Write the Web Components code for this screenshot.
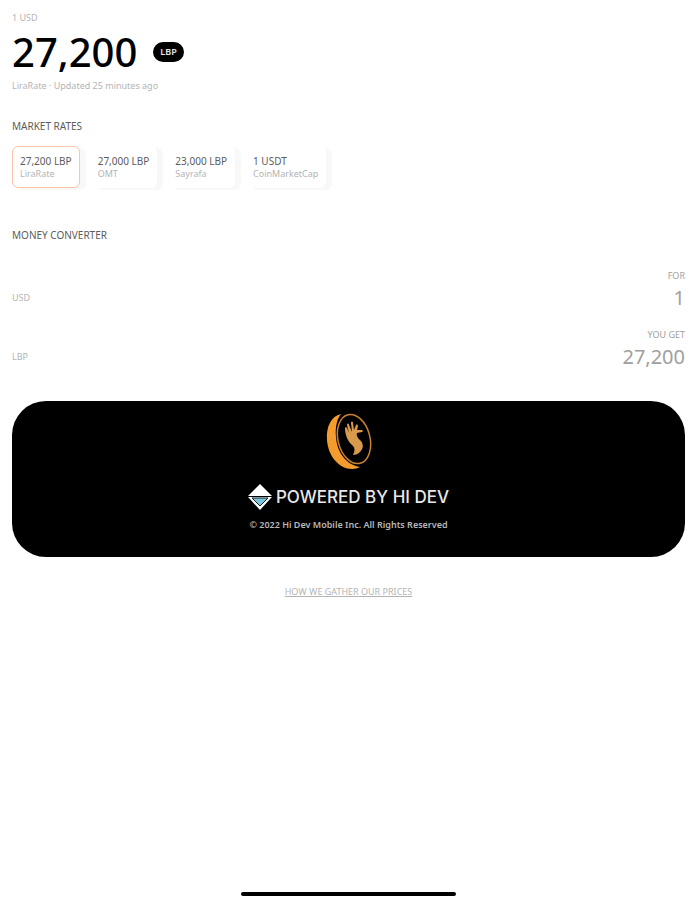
<!DOCTYPE html>
<html lang="en">
<head>
<meta charset="utf-8">
<meta name="viewport" content="width=device-width, initial-scale=1">
<title>LiraRate</title>
<style>
    html, body {
        margin: 0;
        background: #ffffff;
    }
</style>
</head>
<body>
<lira-app>
    <rate-header currency="LBP" updated="LiraRate · Updated 25 minutes ago">
        <span slot="base">1 USD</span>
        <span slot="value">27,200</span>
    </rate-header>
    <rate-section heading="Market rates">
        <rate-list>
            <rate-card selected rate="27,200 LBP" source="LiraRate"></rate-card>
            <rate-card rate="27,000 LBP" source="OMT"></rate-card>
            <rate-card rate="23,000 LBP" source="Sayrafa"></rate-card>
            <rate-card rate="1 USDT" source="CoinMarketCap"></rate-card>
        </rate-list>
    </rate-section>
    <rate-section heading="Money converter" roomy>
        <money-field label="FOR" unit="USD" value="1"></money-field>
        <money-field label="YOU GET" unit="LBP" value="27,200"></money-field>
    </rate-section>
    <powered-banner>© 2022 Hi Dev Mobile Inc. All Rights Reserved</powered-banner>
    <text-link href="#prices">HOW WE GATHER OUR PRICES</text-link>
    <home-indicator></home-indicator>
</lira-app>

<script>
function define(name, html, setup) {
    const template = document.createElement("template");
    template.innerHTML = html;
    customElements.define(name, class extends HTMLElement {
        constructor() {
            super();
            this.attachShadow({ mode: "open" });
            this.shadowRoot.appendChild(template.content.cloneNode(true));
        }
        connectedCallback() {
            if (setup) setup(this, (selector) => this.shadowRoot.querySelector(selector));
        }
    });
}

define("lira-app", /*html*/ `
<style>
    :host {
        --black: #000000;
        --ink: #5c5c5c;
        --gray: #a0a0a0;
        --pale: #b4b4b4;
        --accent: #fcc4a8;
        display: flex;
        flex-direction: column;
        box-sizing: border-box;
        min-height: 100vh;
        padding: 12px 13px 4px 12px;
        font-family: "Noto Sans", "Open Sans", sans-serif;
        font-size: 9px;
        line-height: 12px;
        color: var(--pale);
    }
</style>
<slot></slot>
`);

define("rate-header", /*html*/ `
<style>
    :host { display: block; }
    .row {
        display: flex;
        align-items: center;
        gap: 16px;
        height: 56px;
    }
    h1 {
        margin: 0;
        font-size: 40px;
        line-height: 56px;
        font-weight: 500;
        color: var(--black);
    }
    .badge {
        padding: 4px 7px;
        border-radius: 10px;
        background: var(--black);
        color: #e4e4e4;
        font-weight: 600;
    }
    p { margin: 0; }
</style>
<slot name="base"></slot>
<div class="row">
    <h1><slot name="value"></slot></h1>
    <span class="badge"></span>
</div>
<p></p>
`, (host, $) => {
    $(".badge").textContent = host.getAttribute("currency");
    $("p").textContent = host.getAttribute("updated");
});

define("rate-section", /*html*/ `
<style>
    :host {
        display: block;
        margin-top: 27px;
    }
    :host([roomy]) { margin-top: 40px; }
    h2 {
        margin: 0 0 13px;
        font-size: 10px;
        line-height: 14px;
        font-weight: 400;
        text-transform: uppercase;
        color: var(--ink);
    }
    :host([roomy]) h2 { margin-bottom: 28px; }
</style>
<section>
    <h2></h2>
    <slot></slot>
</section>
`, (host, $) => {
    $("h2").textContent = host.getAttribute("heading");
});

define("rate-list", /*html*/ `
<style>
    :host {
        display: flex;
        flex-wrap: wrap;
        gap: 10px;
    }
</style>
<slot></slot>
`);

define("rate-card", /*html*/ `
<style>
    :host { display: block; }
    button {
        display: block;
        padding: 7px;
        border: 1px solid transparent;
        border-radius: 6px;
        background: #ffffff;
        box-shadow: 6px 2px 2px #f8f8f8;
        font: inherit;
        text-align: left;
        color: var(--pale);
        cursor: pointer;
    }
    :host([selected]) button { border-color: var(--accent); }
    .rate {
        display: block;
        font-size: 10px;
        line-height: 14px;
        color: var(--ink);
    }
    .source { display: block; }
</style>
<button type="button">
    <span class="rate"></span>
    <span class="source"></span>
</button>
`, (host, $) => {
    $(".rate").textContent = host.getAttribute("rate");
    $(".source").textContent = host.getAttribute("source");
    $("button").setAttribute("aria-pressed", host.hasAttribute("selected"));
});

define("money-field", /*html*/ `
<style>
    :host {
        display: block;
        margin-bottom: 15px;
    }
    label {
        display: block;
        text-align: right;
        color: var(--gray);
    }
    .row {
        display: flex;
        align-items: center;
        height: 32px;
    }
    input {
        flex: 1;
        min-width: 0;
        padding: 0;
        border: 0;
        outline: none;
        background: none;
        font: inherit;
        font-size: 20px;
        line-height: 32px;
        text-align: right;
        color: var(--gray);
    }
</style>
<label for="amount"></label>
<div class="row">
    <span></span>
    <input id="amount" type="text" inputmode="decimal">
</div>
`, (host, $) => {
    $("label").textContent = host.getAttribute("label");
    $("span").textContent = host.getAttribute("unit");
    $("input").value = host.getAttribute("value");
});

define("powered-banner", /*html*/ `
<style>
    :host { display: block; margin-top: 13px; }
    footer {
        display: flex;
        flex-direction: column;
        align-items: center;
        padding: 12px 16px 26px;
        border-radius: 34px;
        background: var(--black);
        color: #b8b8b8;
    }
    .brand {
        display: flex;
        align-items: center;
        gap: 4px;
        margin: 12px 0 8px;
        font-family: Inter, "Noto Sans", sans-serif;
        font-size: 17px;
        line-height: 28px;
        font-weight: 500;
        color: #e8e8e8;
    }
    svg { display: block; }
    .legal { font-weight: 600; }
</style>
<footer>
    <svg width="48" height="58" viewBox="0 0 48 58" aria-hidden="true">
        <path d="M16 1C6 3 1 14 2 27c1 16 12 29 25 29 3 0 6-1 8-2C22 52 12 40 11 24 10 14 12 6 16 1Z" fill="#f59a2c"/>
        <ellipse cx="29" cy="26" rx="16" ry="25" transform="rotate(-14 29 26)" fill="none" stroke="#c98234" stroke-width="1.5"/>
        <path d="M20 15c0-1 2-1 2 0l2 5-2-8c0-2 2-2 2 0l3 7-1-9c0-2 2-2 2 0l1 7 2-5c1-1 2 0 2 1l-1 4 5 0c1 0 1 2 0 2l-5 1c-1 3 1 5 4 8 3 4 2 8-1 11-2 2-4 3-7 3 2-4 2-7 0-9-5-4-8-11-8-18Z" fill="#d99a4e"/>
    </svg>
    <div class="brand">
        <svg width="24" height="26" viewBox="0 0 24 26" aria-hidden="true">
            <path d="M12 0 24 12H0Z" fill="#ffffff"/>
            <path d="M0 13H24L12 26Z" fill="#ffffff"/>
            <path d="M4 14H20L12 22Z" fill="#7cc5da" stroke="#10242c" stroke-width="1"/>
        </svg>
        <span>POWERED BY HI DEV</span>
    </div>
    <div class="legal"><slot></slot></div>
</footer>
`);

define("text-link", /*html*/ `
<style>
    :host {
        display: block;
        margin-top: 29px;
        text-align: center;
    }
    a { color: var(--pale); }
</style>
<a><slot></slot></a>
`, (host, $) => {
    $("a").href = host.getAttribute("href");
});

define("home-indicator", /*html*/ `
<style>
    :host {
        display: block;
        width: 32%;
        height: 4px;
        margin: auto auto 0;
        border-radius: 2px;
        background: var(--black);
    }
</style>
`);
</script>
</body>
</html>
